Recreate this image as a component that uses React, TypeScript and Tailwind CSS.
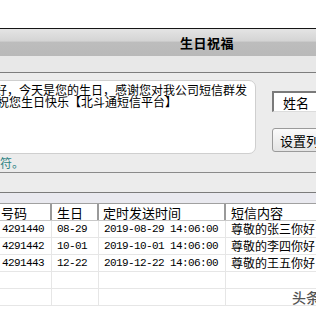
import React from "react";

const rows = [
  ["4291440", "08-29", "2019-08-29 14:06:00", "尊敬的张三你好"],
  ["4291442", "10-01", "2019-10-01 14:06:00", "尊敬的李四你好"],
  ["4291443", "12-22", "2019-12-22 14:06:00", "尊敬的王五你好"],
  ["", "", "", ""],
  ["", "", "", ""],
];

export default function App() {
  return (
    <div className="relative w-[316px] h-[316px] overflow-hidden bg-white font-['Noto_Sans_CJK_SC',sans-serif] text-black">
      <div className="h-[28px] bg-white" />
      <div className="h-px bg-[#151515]" />
      <div className="h-[27px] bg-[linear-gradient(to_bottom,#e4e4e4_0%,#d4d4d4_45%,#bdbdbd_48%,#b9b9b9_100%)] flex items-center pl-[180px]">
        <span className="text-[13px] font-bold leading-none tracking-[0.5px]">生日祝福</span>
      </div>
      <div className="h-[16px] bg-[#e8e8e8]" />
      <div className="h-px bg-[#7d7d7d]" />
      <div className="h-[99px] bg-[#ececec] flex">
        <div className="w-[256px] shrink-0 flex flex-col pt-[7px]">
          <div className="h-[74px] ml-[-10px] bg-white border border-[#cfcfcf] rounded-r-[7px] pt-[3px] text-[12px] leading-[12px] whitespace-nowrap overflow-hidden">
            <div className="ml-[4px]">好，今天是您的生日，感谢您对我公司短信群发</div>
            <div className="ml-[6px]">祝您生日快乐【北斗通短信平台】</div>
          </div>
          <div className="text-[12px] leading-[14px] mt-[2px] text-[#2f8484]">符。</div>
        </div>
        <div className="flex flex-col pl-[16px]">
          <div className="mt-[18px] h-[21px] w-[60px] bg-white border-t-2 border-l-2 border-t-[#7a7a7a] border-l-[#7a7a7a] border-b border-b-[#dcdcdc] flex items-center pl-[9px] text-[13px] leading-none">
            姓名
          </div>
          <div className="mt-[16px] h-[24px] w-[60px] rounded-[3px] border border-[#9a9a9a] bg-[linear-gradient(to_bottom,#fbfbfb,#e4e4e4)] flex items-center pl-[7px] text-[13px] leading-none whitespace-nowrap">
            设置列表
          </div>
        </div>
      </div>
      <div className="h-px bg-[#8a8a8a]" />
      <div className="h-[19px] bg-[#ececec]" />
      <div className="h-px bg-[#7b7b7b]" />
      <div className="h-[10px] bg-[#e9e9ef]" />
      <div className="border-t border-[#a0a0a0] bg-white">
        <div className="flex h-[17px] border-b border-[#c8c8c8] text-[13px] leading-none items-center">
          <div className="w-[52px] pl-[1px] border-r-2 border-r-[#9a9a9a] h-full flex items-center">号码</div>
          <div className="w-[47px] pl-[5px] border-r-2 border-r-[#9a9a9a] h-full flex items-center">生日</div>
          <div className="w-[127px] pl-[4px] border-r-2 border-r-[#9a9a9a] h-full flex items-center">定时发送时间</div>
          <div className="flex-1 pl-[5px] h-full flex items-center whitespace-nowrap">短信内容</div>
        </div>
        {rows.map((r, i) => (
          <div key={i} className="flex h-[17px] border-b border-[#e6e6e6] items-center">
            <div className="w-[52px] h-full border-r border-[#e6e6e6] pl-[2px] flex items-center font-['Liberation_Mono',monospace] text-[11px] tracking-[-0.6px]">{r[0]}</div>
            <div className="w-[47px] h-full border-r border-[#e6e6e6] pl-[5px] flex items-center font-['Liberation_Mono',monospace] text-[11px] tracking-[-0.6px]">{r[1]}</div>
            <div className="w-[127px] h-full border-r border-[#e6e6e6] pl-[5px] flex items-center font-['Liberation_Mono',monospace] text-[11px] tracking-[-0.6px] whitespace-nowrap">{r[2]}</div>
            <div className="flex-1 h-full pl-[5px] flex items-center text-[12px] whitespace-nowrap">{r[3]}</div>
          </div>
        ))}
      </div>
      <div className="absolute left-[292px] top-[290px] text-[14px] leading-none font-medium text-[#555] whitespace-nowrap">头条</div>
    </div>
  );
}
